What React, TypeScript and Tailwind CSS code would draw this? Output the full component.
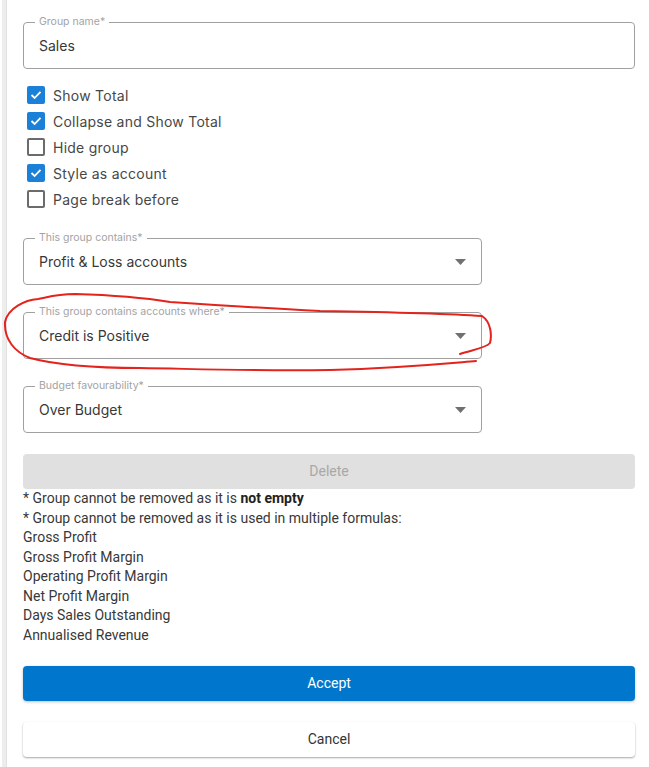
import { ReactNode } from "react";

const inter = { fontFamily: "Inter, 'Noto Sans', sans-serif" };
const roboto = { fontFamily: "Roboto, 'Liberation Sans', sans-serif" };

interface FieldProps {
  label: string;
  value: string;
  select?: boolean;
  className?: string;
}

function Field(props: FieldProps) {
  const { label, value, select, className } = props;
  return (
    <div
      className={`relative h-[47px] border border-[#a0a0a0] rounded-[4px] flex items-center pl-[15px] pr-[14px] ${className ?? ""}`}
    >
      <span className="absolute -top-[7px] left-[11px] px-1 bg-white text-[10.5px] leading-[12px] text-[#a3a3a3]">
        {label}
      </span>
      <span className="flex-1 text-[14px] text-[#383838]">{value}</span>
      {select && (
        <svg width="11" height="6" viewBox="0 0 11 6" className="mr-[1px]">
          <path d="M0 0 L11 0 L5.5 6 Z" fill="#707070" />
        </svg>
      )}
    </div>
  );
}

function Check({ checked, label }: { checked: boolean; label: string }) {
  return (
    <div className="h-[26px] flex items-center pl-[4px]">
      {checked ? (
        <span className="w-[18px] h-[18px] rounded-[2px] bg-[#1b80d8] flex items-center justify-center">
          <svg width="12" height="10" viewBox="0 0 12 10">
            <path d="M1.5 5 L4.6 8 L10.5 1.8" stroke="white" strokeWidth="1.8" fill="none" />
          </svg>
        </span>
      ) : (
        <span className="w-[18px] h-[18px] rounded-[2px] border-2 border-[#6b6b6b]" />
      )}
      <span className="ml-[8px] text-[14px] tracking-[0.25px] text-[#474747]">{label}</span>
    </div>
  );
}

function Line({ children }: { children: ReactNode }) {
  return <div className="leading-[19.5px]">{children}</div>;
}

export default function App() {
  const formulas = [
    "Gross Profit",
    "Gross Profit Margin",
    "Operating Profit Margin",
    "Net Profit Margin",
    "Days Sales Outstanding",
    "Annualised Revenue",
  ];

  return (
    <div className="relative w-[649px] h-[767px] bg-white flex overflow-hidden" style={inter}>
      <div className="ml-[2px] w-[5px] bg-[#ededed] border-r border-[#e2e2e2]" />
      <div className="flex-1 pl-[16px] pr-[14px] pt-[22px] flex flex-col">
        <Field label="Group name*" value="Sales" />

        <div className="mt-[13px] flex flex-col">
          <Check checked label="Show Total" />
          <Check checked label="Collapse and Show Total" />
          <Check checked={false} label="Hide group" />
          <Check checked label="Style as account" />
          <Check checked={false} label="Page break before" />
        </div>

        <div className="mt-[26px] flex flex-col gap-[27px]">
          <Field label="This group contains*" value="Profit & Loss accounts" select className="w-[459px]" />
          <Field label="This group contains accounts where*" value="Credit is Positive" select className="w-[459px]" />
          <Field label="Budget favourability*" value="Over Budget" select className="w-[459px]" />
        </div>

        <button
          className="mt-[21px] h-[35px] rounded-[4px] bg-[#e0e0e0] text-[14px] text-[#a8a8a8]"
          style={roboto}
        >
          Delete
        </button>

        <div className="text-[14px] text-[#383838]" style={roboto}>
          <Line>
            * Group cannot be removed as it is <b className="font-bold text-[#222]">not empty</b>
          </Line>
          <Line>* Group cannot be removed as it is used in multiple formulas:</Line>
          {formulas.map((f) => (
            <Line key={f}>{f}</Line>
          ))}
        </div>

        <button
          className="mt-[21px] h-[35px] rounded-[4px] bg-[#0077cc] text-white text-[14px] shadow-[0_1px_3px_rgba(0,0,0,0.25)]"
          style={roboto}
        >
          Accept
        </button>
        <button
          className="mt-[21px] h-[35px] rounded-[4px] bg-white text-[#333] text-[14px] shadow-[0_1px_2px_rgba(0,0,0,0.35)]"
          style={roboto}
        >
          Cancel
        </button>
      </div>

      <svg
        className="absolute inset-0 pointer-events-none"
        width="649"
        height="767"
        viewBox="0 0 649 767"
      >
        <path
          d="M460 354 C 472 350, 486 348, 490 343 C 492 335, 491 322, 482 316 C 440 313, 380 312, 320 311 C 260 308, 200 304, 170 302 C 140 297, 110 295, 75 294 C 55 294, 45 298, 38 299 C 25 300, 8 308, 5 322 C 4 340, 15 352, 30 358 C 60 366, 100 368, 140 368 C 200 369, 250 371, 330 370 C 400 368, 440 364, 476 361"
          stroke="#e3231c"
          strokeWidth="2"
          fill="none"
          strokeLinecap="round"
        />
      </svg>
    </div>
  );
}
